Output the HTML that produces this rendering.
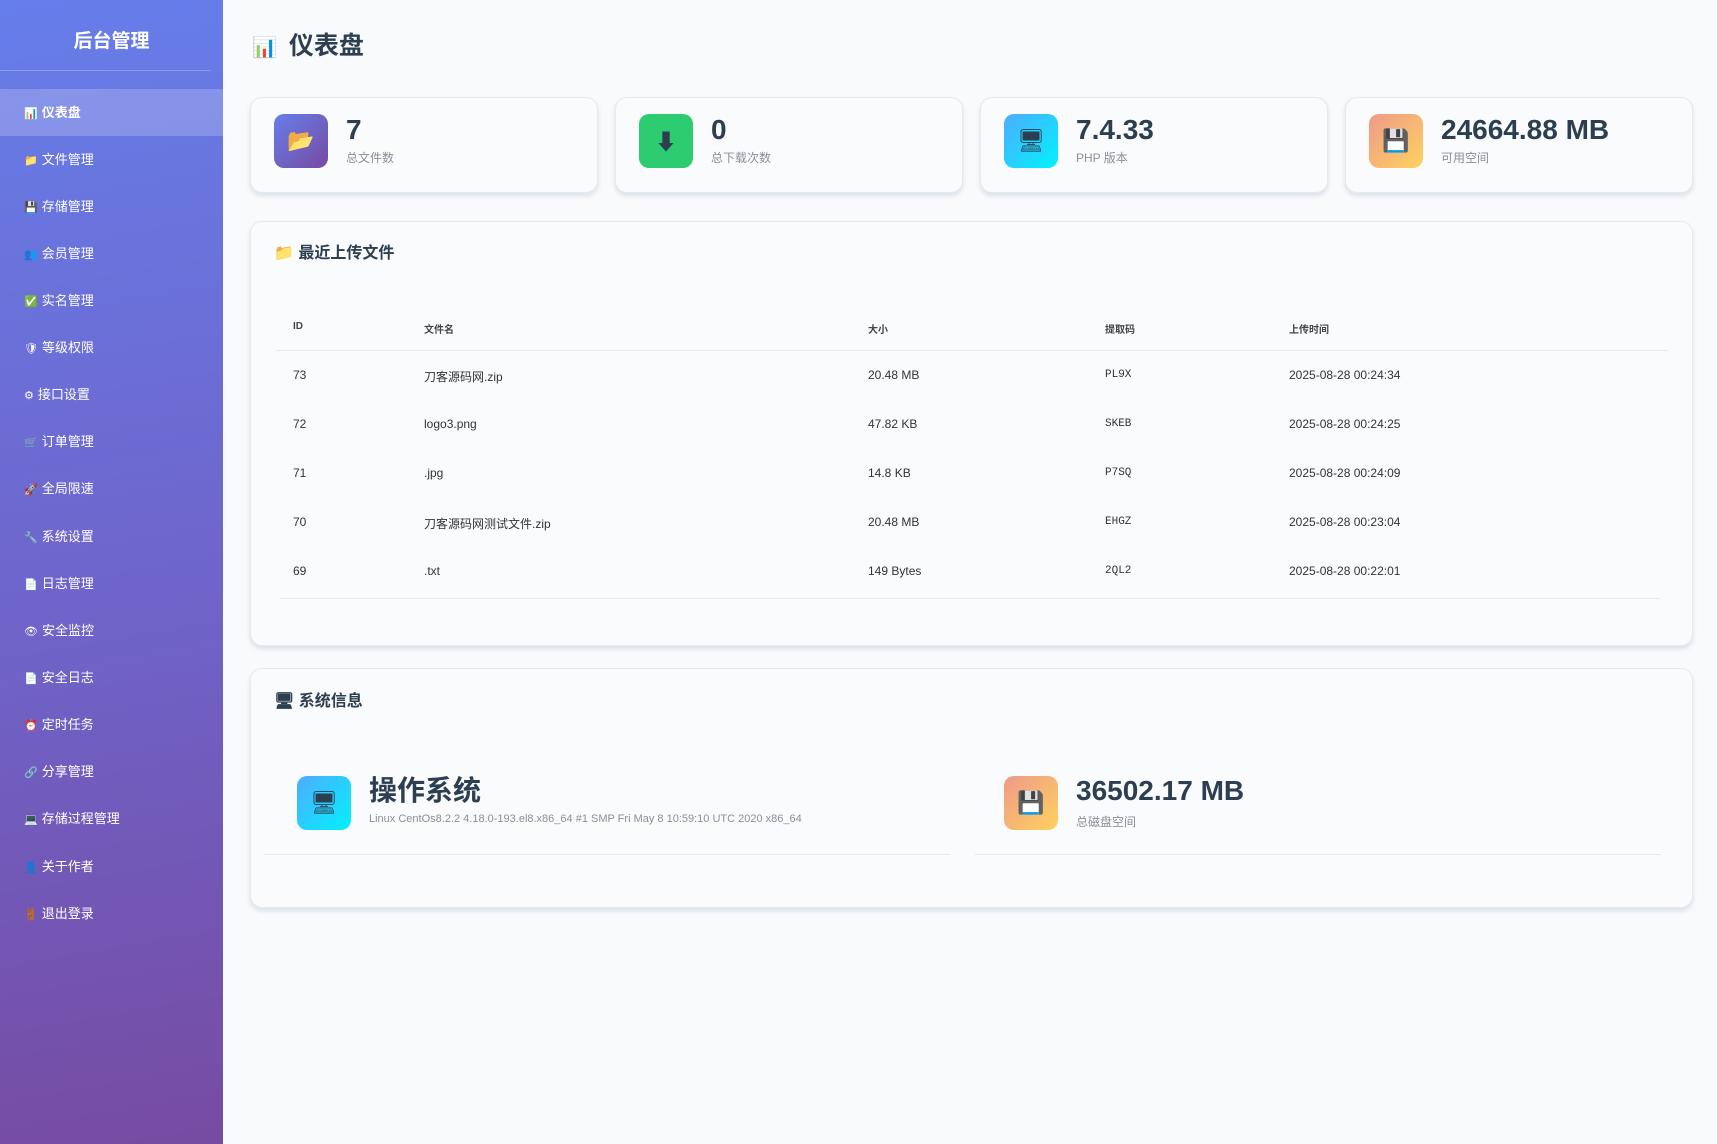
<!DOCTYPE html>
<html><head><meta charset="utf-8"><style>
*{margin:0;padding:0;box-sizing:border-box}
body{width:1717px;height:1144px;background:#f8fafc;font-family:"Liberation Sans","Noto Sans CJK SC",sans-serif;color:#2c3e50;position:relative;overflow:hidden}
.side{position:absolute;left:0;top:0;width:223px;height:1144px;background:linear-gradient(170deg,#667eea 0%,#6f63c8 55%,#764ba2 100%)}
.logo{position:absolute;top:26px;width:223px;text-align:center;color:#fff;font-weight:bold;font-size:19px}
.div{position:absolute;top:70px;left:0;width:210px;height:1px;background:rgba(255,255,255,.25)}
.item{position:absolute;left:0;width:223px;height:47px;line-height:47px;padding-left:24px;color:#fff;font-size:13px}
.item.act{background:rgba(255,255,255,.2)}
.item i{font-style:normal;font-size:11px;margin-right:4px}
.h1{position:absolute;left:252px;top:26px;font-size:25px;font-weight:bold}
.card{position:absolute;background:#f9fbfd;border:1px solid #e4eaee;border-radius:12px;box-shadow:0 3px 4px rgba(200,210,215,.6)}
.ic{position:absolute;width:54px;height:54px;border-radius:10px;display:flex;align-items:center;justify-content:center;font-size:22px}
.num{position:absolute;font-size:28px;font-weight:bold;line-height:32px}
.lbl{position:absolute;font-size:12px;color:#8a8f98}
.t{position:absolute;font-size:12px;color:#333}
.th{position:absolute;font-size:10px;font-weight:bold;color:#444}
.ln{position:absolute;height:1px;background:#e3e9ec}
.ttl{position:absolute;font-size:16px;font-weight:bold}
.mono{font-family:"Liberation Mono",monospace;font-size:11px}
</style></head><body>
<div class="side">
<div class="logo">后台管理</div><div class="div"></div>
<div class="item act" style="top:89px"><i>📊</i><b>仪表盘</b></div>
<div class="item" style="top:136px"><i>📁</i>文件管理</div>
<div class="item" style="top:183px"><i>💾</i>存储管理</div>
<div class="item" style="top:230px"><i>👥</i>会员管理</div>
<div class="item" style="top:277px"><i>✅</i>实名管理</div>
<div class="item" style="top:324px"><i>🛡</i>等级权限</div>
<div class="item" style="top:371px"><i>⚙</i>接口设置</div>
<div class="item" style="top:418px"><i>🛒</i>订单管理</div>
<div class="item" style="top:465px"><i>🚀</i>全局限速</div>
<div class="item" style="top:513px"><i>🔧</i>系统设置</div>
<div class="item" style="top:560px"><i>📄</i>日志管理</div>
<div class="item" style="top:607px"><i>👁</i>安全监控</div>
<div class="item" style="top:654px"><i>📄</i>安全日志</div>
<div class="item" style="top:701px"><i>⏰</i>定时任务</div>
<div class="item" style="top:748px"><i>🔗</i>分享管理</div>
<div class="item" style="top:795px"><i>💻</i>存储过程管理</div>
<div class="item" style="top:843px"><i>👤</i>关于作者</div>
<div class="item" style="top:890px"><i>🚪</i>退出登录</div>
</div>
<div class="h1"><span style="font-size:20px;margin-right:12px">📊</span>仪表盘</div>

<div class="card" style="left:250px;top:97px;width:348px;height:96px"></div>
<div class="card" style="left:615px;top:97px;width:348px;height:96px"></div>
<div class="card" style="left:980px;top:97px;width:348px;height:96px"></div>
<div class="card" style="left:1345px;top:97px;width:348px;height:96px"></div>
<div class="ic" style="left:274px;top:114px;background:linear-gradient(135deg,#667eea,#764ba2)">📂</div>
<div class="ic" style="left:639px;top:114px;background:#2ecc71">⬇</div>
<div class="ic" style="left:1004px;top:114px;background:linear-gradient(135deg,#4facfe,#00f2fe)">🖥</div>
<div class="ic" style="left:1369px;top:114px;background:linear-gradient(135deg,#ee9a8a,#fed25e)">💾</div>
<div class="num" style="left:346px;top:114px">7</div><div class="lbl" style="left:346px;top:149px">总文件数</div>
<div class="num" style="left:711px;top:114px">0</div><div class="lbl" style="left:711px;top:149px">总下载次数</div>
<div class="num" style="left:1076px;top:114px">7.4.33</div><div class="lbl" style="left:1076px;top:149px">PHP 版本</div>
<div class="num" style="left:1441px;top:114px">24664.88 MB</div><div class="lbl" style="left:1441px;top:149px">可用空间</div>

<div class="card" style="left:250px;top:221px;width:1443px;height:425px"></div>
<div class="ttl" style="left:274px;top:239px">📁 最近上传文件</div>
<div class="th" style="left:293px;top:321px">ID</div>
<div class="th" style="left:424px;top:321px">文件名</div>
<div class="th" style="left:868px;top:321px">大小</div>
<div class="th" style="left:1105px;top:321px">提取码</div>
<div class="th" style="left:1289px;top:321px">上传时间</div>
<div class="ln" style="left:276px;top:350px;width:1392px"></div>
<div class="t" style="left:293px;top:368px">73</div><div class="t" style="left:424px;top:368px">刀客源码网.zip</div><div class="t" style="left:868px;top:368px">20.48 MB</div><div class="t mono" style="left:1105px;top:369px">PL9X</div><div class="t" style="left:1289px;top:368px">2025-08-28 00:24:34</div>
<div class="t" style="left:293px;top:417px">72</div><div class="t" style="left:424px;top:417px">logo3.png</div><div class="t" style="left:868px;top:417px">47.82 KB</div><div class="t mono" style="left:1105px;top:418px">SKEB</div><div class="t" style="left:1289px;top:417px">2025-08-28 00:24:25</div>
<div class="t" style="left:293px;top:466px">71</div><div class="t" style="left:424px;top:466px">.jpg</div><div class="t" style="left:868px;top:466px">14.8 KB</div><div class="t mono" style="left:1105px;top:467px">P7SQ</div><div class="t" style="left:1289px;top:466px">2025-08-28 00:24:09</div>
<div class="t" style="left:293px;top:515px">70</div><div class="t" style="left:424px;top:515px">刀客源码网测试文件.zip</div><div class="t" style="left:868px;top:515px">20.48 MB</div><div class="t mono" style="left:1105px;top:516px">EHGZ</div><div class="t" style="left:1289px;top:515px">2025-08-28 00:23:04</div>
<div class="t" style="left:293px;top:564px">69</div><div class="t" style="left:424px;top:564px">.txt</div><div class="t" style="left:868px;top:564px">149 Bytes</div><div class="t mono" style="left:1105px;top:565px">2QL2</div><div class="t" style="left:1289px;top:564px">2025-08-28 00:22:01</div>
<div class="ln" style="left:280px;top:598px;width:1380px"></div>

<div class="card" style="left:250px;top:668px;width:1443px;height:240px"></div>
<div class="ttl" style="left:274px;top:687px">🖥 系统信息</div>
<div class="ic" style="left:297px;top:776px;background:linear-gradient(135deg,#4facfe,#00f2fe)">🖥</div>
<div class="num" style="left:369px;top:775px">操作系统</div>
<div class="lbl" style="left:369px;top:813px;font-size:11px">Linux CentOs8.2.2 4.18.0-193.el8.x86_64 #1 SMP Fri May 8 10:59:10 UTC 2020 x86_64</div>
<div class="ln" style="left:264px;top:854px;width:686px"></div>
<div class="ic" style="left:1004px;top:776px;background:linear-gradient(135deg,#ee9a8a,#fed25e)">💾</div>
<div class="num" style="left:1076px;top:775px">36502.17 MB</div>
<div class="lbl" style="left:1076px;top:813px">总磁盘空间</div>
<div class="ln" style="left:975px;top:854px;width:686px"></div>
</body></html>
